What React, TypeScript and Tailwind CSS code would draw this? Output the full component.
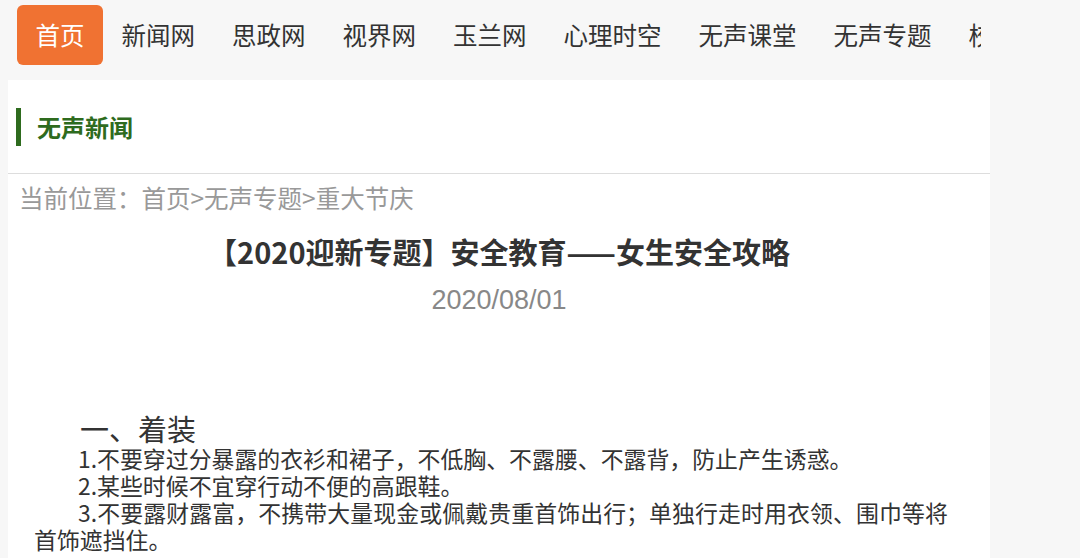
const navItems = ["首页", "新闻网", "思政网", "视界网", "玉兰网", "心理时空", "无声课堂", "无声专题", "校园风采"];

const font = { fontFamily: '"Noto Sans CJK SC", "Noto Sans", sans-serif' };

export default function App() {
  return (
    <div className="min-h-screen bg-[#f7f7f7] text-[#333]" style={font}>
      {/* Top nav, clipped at the panel edge */}
      <nav className="h-[80px] w-[981px] overflow-hidden flex items-start pt-[5px] pl-[17px] whitespace-nowrap">
        {navItems.map((item, i) => (
          <a
            key={item}
            href="#"
            className={
              i === 0
                ? "h-[60px] shrink-0 px-[18.5px] flex items-center text-[24.5px] leading-none rounded-[6px] bg-[#f07232] text-white"
                : "h-[60px] shrink-0 px-[18.5px] flex items-center text-[24.5px] leading-none text-[#333]"
            }
          >
            {item}
          </a>
        ))}
      </nav>

      <div className="ml-[8px] w-[982px] bg-white pb-[20px]">
        {/* Section header */}
        <div className="h-[94px] border-b border-[#dddddd] flex items-center pl-[8px]">
          <span className="w-[5px] h-[38px] bg-[#2e6b1e]" />
          <span className="ml-[16px] text-[24px] font-bold text-[#2e6b1e] leading-none">无声新闻</span>
        </div>

        {/* Breadcrumb */}
        <div className="pl-[11px] pt-[10px] text-[24.5px] leading-[28px] text-[#999]">
          当前位置：首页&gt;无声专题&gt;重大节庆
        </div>

        {/* Article */}
        <h1 className="mt-[23px] text-center text-[29px] font-bold leading-[32px] text-[#333]">
          【2020迎新专题】安全教育——女生安全攻略
        </h1>
        <div
          className="mt-[18px] text-center text-[27px] leading-[30px] text-[#888]"
          style={{ fontFamily: '"Liberation Sans", "Noto Sans", sans-serif' }}
        >
          2020/08/01
        </div>

        <div className="mt-[96px] pl-[26px] w-[940px] text-[22.9px] leading-[27px] text-[#333]">
          <p className="indent-[46px] text-[29px] leading-[34px]">一、着装</p>
          <p className="indent-[44px] text-justify">1.不要穿过分暴露的衣衫和裙子，不低胸、不露腰、不露背，防止产生诱惑。</p>
          <p className="indent-[44px] text-justify">2.某些时候不宜穿行动不便的高跟鞋。</p>
          <p className="indent-[44px] text-justify">3.不要露财露富，不携带大量现金或佩戴贵重首饰出行；单独行走时用衣领、围巾等将首饰遮挡住。</p>
        </div>
      </div>
    </div>
  );
}
